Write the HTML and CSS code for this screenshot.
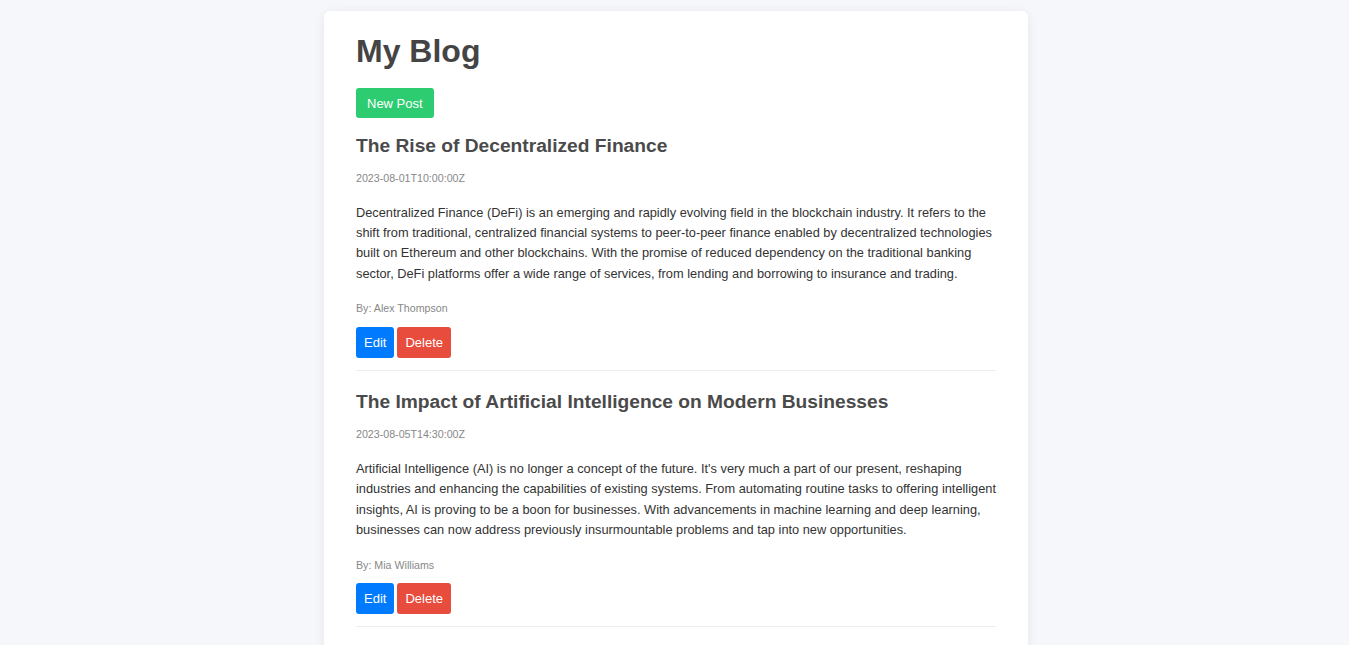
FILE: index.html
```html
<!DOCTYPE html>
<html lang="en">
<head>
<meta charset="utf-8">
<title>My Blog</title>
<link rel="stylesheet" href="styles.css">
</head>
<body>
<main class="card">
  <h1 class="blog-title">My Blog</h1>
  <div class="toolbar"><button class="btn btn-new">New Post</button></div>

  <article class="post">
    <h2 class="post-title">The Rise of Decentralized Finance</h2>
    <p class="post-date">2023-08-01T10:00:00Z</p>
    <p class="post-body">Decentralized Finance (DeFi) is an emerging and rapidly evolving field in the blockchain industry. It refers to the shift from traditional, centralized financial systems to peer-to-peer finance enabled by decentralized technologies built on Ethereum and other blockchains. With the promise of reduced dependency on the traditional banking sector, DeFi platforms offer a wide range of services, from lending and borrowing to insurance and trading.</p>
    <p class="post-author">By: Alex Thompson</p>
    <div class="actions">
      <button class="btn btn-edit">Edit</button>
      <button class="btn btn-delete">Delete</button>
    </div>
  </article>

  <article class="post">
    <h2 class="post-title">The Impact of Artificial Intelligence on Modern Businesses</h2>
    <p class="post-date">2023-08-05T14:30:00Z</p>
    <p class="post-body">Artificial Intelligence (AI) is no longer a concept of the future. It's very much a part of our present, reshaping industries and enhancing the capabilities of existing systems. From automating routine tasks to offering intelligent insights, AI is proving to be a boon for businesses. With advancements in machine learning and deep learning, businesses can now address previously insurmountable problems and tap into new opportunities.</p>
    <p class="post-author">By: Mia Williams</p>
    <div class="actions">
      <button class="btn btn-edit">Edit</button>
      <button class="btn btn-delete">Delete</button>
    </div>
  </article>
</main>
</body>
</html>
```

FILE: styles.css
```css
html, body {
  margin: 0;
}
body {
  background: #f6f7fb;
  font-family: "Liberation Sans", Arial, sans-serif;
  color: #333;
  padding: 11px 0 20px 3px;
}
.card {
  box-sizing: content-box;
  max-width: 640px;
  margin: 0 auto;
  background: #fff;
  border-radius: 6px;
  box-shadow: 0 2px 12px rgba(0, 0, 0, 0.07);
  padding: 22px 32px 32px;
}
.blog-title {
  margin: 0;
  font-size: 32px;
  font-weight: bold;
  color: #444;
  line-height: normal;
}
.toolbar {
  margin-top: 18px;
  display: flex;
}
.btn {
  font-family: "Liberation Sans", Arial, sans-serif;
  font-size: 13px;
  line-height: normal;
  color: #fff;
  border: none;
  border-radius: 3px;
  padding: 8px 8px;
  cursor: pointer;
}
.btn-new {
  background: #2ecc71;
  padding: 7.5px 11px;
}
.btn-edit {
  background: #007bff;
}
.btn-delete {
  background: #e74c3c;
}
.post {
  border-bottom: 1px solid #eee;
  padding-bottom: 12px;
}
.post + .post {
  margin-top: 20px;
}
.toolbar + .post {
  margin-top: 16.5px;
}
.post-title {
  margin: 0;
  font-size: 19.2px;
  font-weight: bold;
  color: #4a4a4a;
  line-height: normal;
}
.post-date {
  margin: 15.5px 0 0;
  font-size: 10.67px;
  color: #888;
  line-height: normal;
}
.post-body {
  margin: 18.5px 0 0;
  font-size: 12.8px;
  line-height: 1.6;
  color: #333;
}
.post-author {
  margin: 18px 0 0;
  font-size: 10.67px;
  color: #888;
  line-height: normal;
}
.actions {
  margin-top: 12.5px;
  display: flex;
  gap: 3px;
}
```
